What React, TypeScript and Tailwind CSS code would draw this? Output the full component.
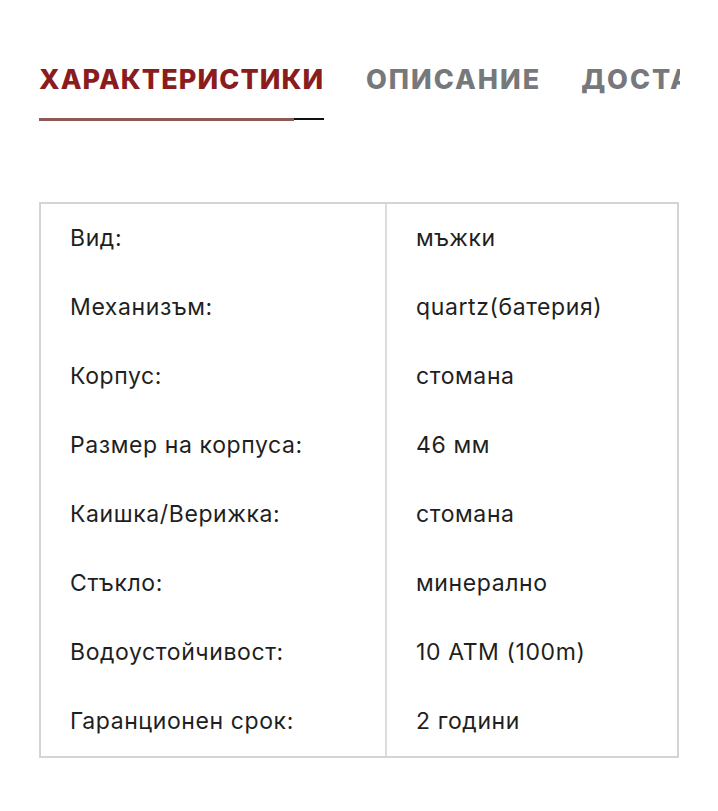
import React from "react";

const rows: [string, string][] = [
  ["Вид:", "мъжки"],
  ["Механизъм:", "quartz(батерия)"],
  ["Корпус:", "стомана"],
  ["Размер на корпуса:", "46 мм"],
  ["Каишка/Верижка:", "стомана"],
  ["Стъкло:", "минерално"],
  ["Водоустойчивост:", "10 ATM (100m)"],
  ["Гаранционен срок:", "2 години"],
];

export default function App() {
  return (
    <div className="w-[718px] h-[811px] bg-white overflow-hidden" style={{ fontFamily: "Inter, 'Open Sans', sans-serif" }}>
      <div className="pt-[64px] pl-[39px] w-[680px] overflow-hidden">
        <div className="flex items-start whitespace-nowrap text-[27px] font-extrabold tracking-[1.1px] leading-[32px]">
          <div className="flex flex-col w-[285px] shrink-0">
            <span className="text-[#8a1c1e]">ХАРАКТЕРИСТИКИ</span>
            <div className="relative mt-[22px] h-[3px] w-[285px]">
              <div className="absolute left-0 top-0 h-[2px] w-[285px] bg-[#111]" />
              <div className="absolute left-0 top-0 h-[3px] w-[255px] bg-[#8e5a55]" />
            </div>
          </div>
          <span className="ml-[42px] text-[#77787b] shrink-0 tracking-[2px]">ОПИСАНИЕ</span>
          <span className="ml-[40px] text-[#77787b] shrink-0 tracking-[2px]">ДОСТАВКА</span>
        </div>
      </div>
      <div className="mt-[81px] ml-[39px] w-[640px] border-2 border-[#d4d4d4] grid grid-cols-[346px_1fr] text-[23px] tracking-[0.6px] text-[#1f1f1f]">
        {rows.map(([k, v], i) => (
          <React.Fragment key={i}>
            <div className="h-[69px] flex items-center pl-[29px] border-r-2 border-[#dcdcdc]">{k}</div>
            <div className="h-[69px] flex items-center pl-[29px]">{v}</div>
          </React.Fragment>
        ))}
      </div>
    </div>
  );
}
